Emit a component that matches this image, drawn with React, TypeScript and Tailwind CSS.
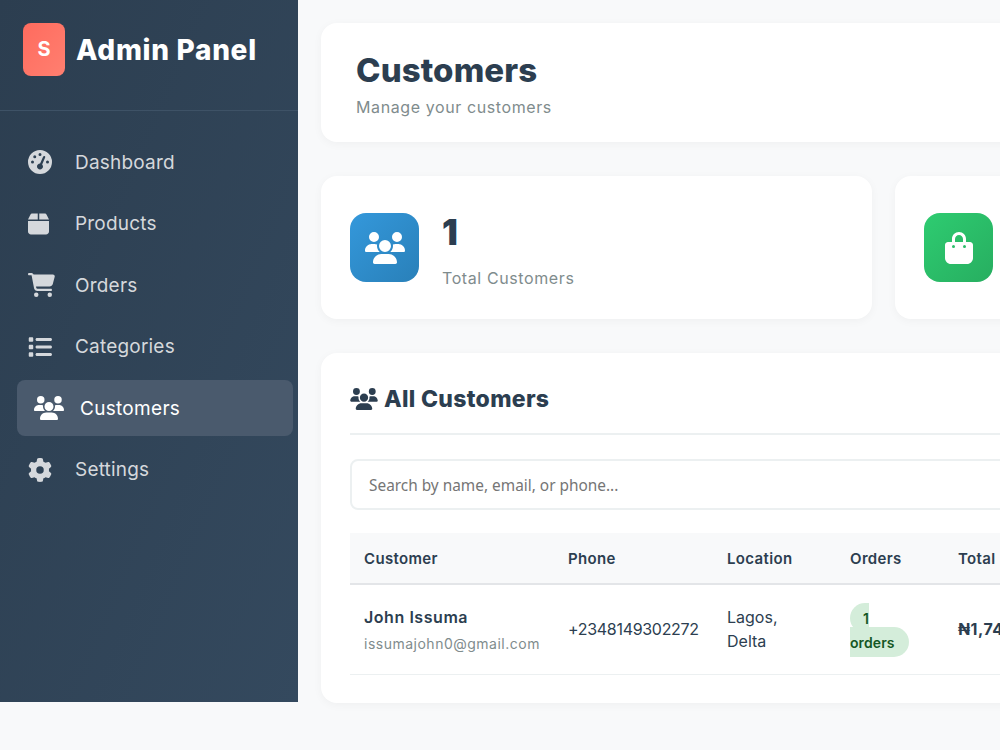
import { FaBagShopping, FaBox, FaCartShopping, FaGaugeHigh, FaGear, FaList, FaUsers } from "react-icons/fa6";

const font = "font-['Inter','Liberation_Sans',sans-serif]";

const nav = [
  { label: "Dashboard", icon: <FaGaugeHigh className="h-[24px] w-[24px] shrink-0" /> },
  { label: "Products", icon: <FaBox className="h-[24px] w-[21px] shrink-0" /> },
  { label: "Orders", icon: <FaCartShopping className="h-[24px] w-[27px] shrink-0" /> },
  { label: "Categories", icon: <FaList className="h-[24px] w-[24px] shrink-0" /> },
  { label: "Customers", icon: <FaUsers className="h-[24px] w-[30px] shrink-0" />, active: true },
  { label: "Settings", icon: <FaGear className="h-[24px] w-[24px] shrink-0" /> },
];

export default function App() {
  return (
    <div className={`flex h-[750px] w-[1000px] items-start overflow-hidden bg-[#f8f9fa] ${font}`}>
      <aside className="h-[702px] w-[298px] shrink-0 bg-gradient-to-br from-[#2c3e50] to-[#34495e]">
        <div className="flex h-[111px] items-center gap-[11px] border-b border-[#3e5266] pb-[12px] pl-[23px]">
          <div className="flex h-[53px] w-[42px] items-center justify-center rounded-lg bg-gradient-to-br from-[#ff6b5e] to-[#ff7f70] text-[20px] font-bold text-white">S</div>
          <span className="relative top-[1px] text-[28px] font-extrabold tracking-[0.7px] whitespace-nowrap text-white">Admin Panel</span>
        </div>
        <nav className="flex flex-col gap-[5.5px] pt-[23px]">
          {nav.map(({ label, icon, active }) =>
            active ? (
              <div key={label} className="ml-[17px] mr-[5px] flex h-[56px] items-center gap-[16px] rounded-lg bg-[#4a5a6d] pl-[17px] text-[19px] tracking-[0.3px] text-white">
                {icon}
                <span className="pt-[2px]">{label}</span>
              </div>
            ) : (
              <div key={label} className="mx-[17px] flex h-[56px] items-center gap-[23px] pl-[11px] text-[19px] tracking-[0.2px] text-[#d5d8dc]">
                <span className="flex w-[24px] justify-start">{icon}</span>
                <span className="pt-[2px]">{label}</span>
              </div>
            ),
          )}
        </nav>
      </aside>

      <main className="flex w-[1400px] shrink-0 flex-col gap-[34px] pl-[23px] pt-[23px]">
        <section className="h-[119px] w-[1100px] rounded-2xl bg-white px-[35px] pt-[26px] shadow-[0_2px_10px_rgba(0,0,0,0.04)]">
          <h1 className="text-[33px] font-extrabold leading-[42px] tracking-[0.1px] text-[#2c3e50]">Customers</h1>
          <p className="mt-[4px] text-[16px] leading-[24px] tracking-[0.6px] text-[#7f8c8d]">Manage your customers</p>
        </section>

        <section className="flex gap-[23px]">
          <div className="flex h-[143px] w-[551px] items-center gap-[23px] rounded-2xl bg-white pl-[29px] shadow-[0_2px_10px_rgba(0,0,0,0.04)]">
            <div className="flex h-[69px] w-[69px] items-center justify-center rounded-2xl bg-gradient-to-br from-[#3498db] to-[#2980b9] text-white">
              <FaUsers className="h-[32px] w-[40px]" />
            </div>
            <div className="pt-[2px]">
              <div className="text-[35px] font-black leading-[48px] text-[#2c3e50]">1</div>
              <div className="mt-[10px] text-[16px] leading-[24px] tracking-[0.6px] text-[#7f8c8d]">Total Customers</div>
            </div>
          </div>
          <div className="flex h-[143px] w-[551px] items-center rounded-2xl bg-white pl-[29px] shadow-[0_2px_10px_rgba(0,0,0,0.04)]">
            <div className="flex h-[69px] w-[69px] items-center justify-center rounded-2xl bg-gradient-to-br from-[#2ecc71] to-[#27ae60] text-white">
              <FaBagShopping className="h-[32px] w-[28px]" />
            </div>
          </div>
        </section>

        <section className="h-[350px] w-[1100px] rounded-2xl bg-white px-[29px] pt-[29px] shadow-[0_2px_10px_rgba(0,0,0,0.04)]">
          <h2 className="flex h-[53px] items-start gap-[6px] border-b-2 border-[#ecf0f1] text-[23px] font-extrabold leading-[34px] tracking-[0.3px] text-[#2c3e50]">
            <FaUsers className="mt-[6px] h-[22px] w-[28px]" />
            All Customers
          </h2>
          <input
            readOnly
            placeholder="Search by name, email, or phone..."
            className="mt-[24px] block h-[51px] w-full rounded-lg border-2 border-[#ecf0f1] pl-[17px] pt-[2px] font-['Noto_Sans',sans-serif] text-[15.4px] outline-none placeholder:text-[#757575]"
          />
          <table className="mt-[23px] w-[1042px] table-fixed border-collapse text-left">
            <colgroup>
              <col className="w-[204px]" />
              <col className="w-[159px]" />
              <col className="w-[123px]" />
              <col className="w-[108px]" />
              <col />
            </colgroup>
            <thead>
              <tr className="h-[51px] border-b-2 border-[#e3e5e8] bg-[#f8f9fa] text-[15px] tracking-[0.35px] text-[#2c3e50]">
                <th className="px-[14px] pt-[2px] font-semibold">Customer</th>
                <th className="px-[14px] pt-[2px] font-semibold">Phone</th>
                <th className="px-[14px] pt-[2px] font-semibold">Location</th>
                <th className="px-[14px] pt-[2px] font-semibold">Orders</th>
                <th className="px-[14px] pt-[2px] font-semibold">Total</th>
              </tr>
            </thead>
            <tbody>
              <tr className="h-[90px] border-b border-[#ecf0f1] text-[16px] text-[#2c3e50]">
                <td className="px-[14px] pt-[2px]">
                  <div className="text-[16px] font-semibold leading-[26px] tracking-[0.55px]">John Issuma</div>
                  <div className="mt-[1px] text-[14px] leading-[26px] tracking-[0.5px] text-[#7f8c8d]">issumajohn0@gmail.com</div>
                </td>
                <td className="px-[14px] tracking-[-0.3px]">+2348149302272</td>
                <td className="px-[14px] leading-[24px]">Lagos,<br />Delta</td>
                <td className="px-[14px] pt-[3px] text-[14px] font-semibold leading-[24px] tracking-[0.1px] text-[#155724]">
                  <span className="rounded-[20px] bg-[#d4edda] pl-[13px] pr-[14px] py-[6.5px]">1<br />orders</span>
                </td>
                <td className="px-[14px] font-bold tracking-[0.5px] whitespace-nowrap">₦1,740</td>
              </tr>
            </tbody>
          </table>
        </section>
      </main>
    </div>
  );
}
